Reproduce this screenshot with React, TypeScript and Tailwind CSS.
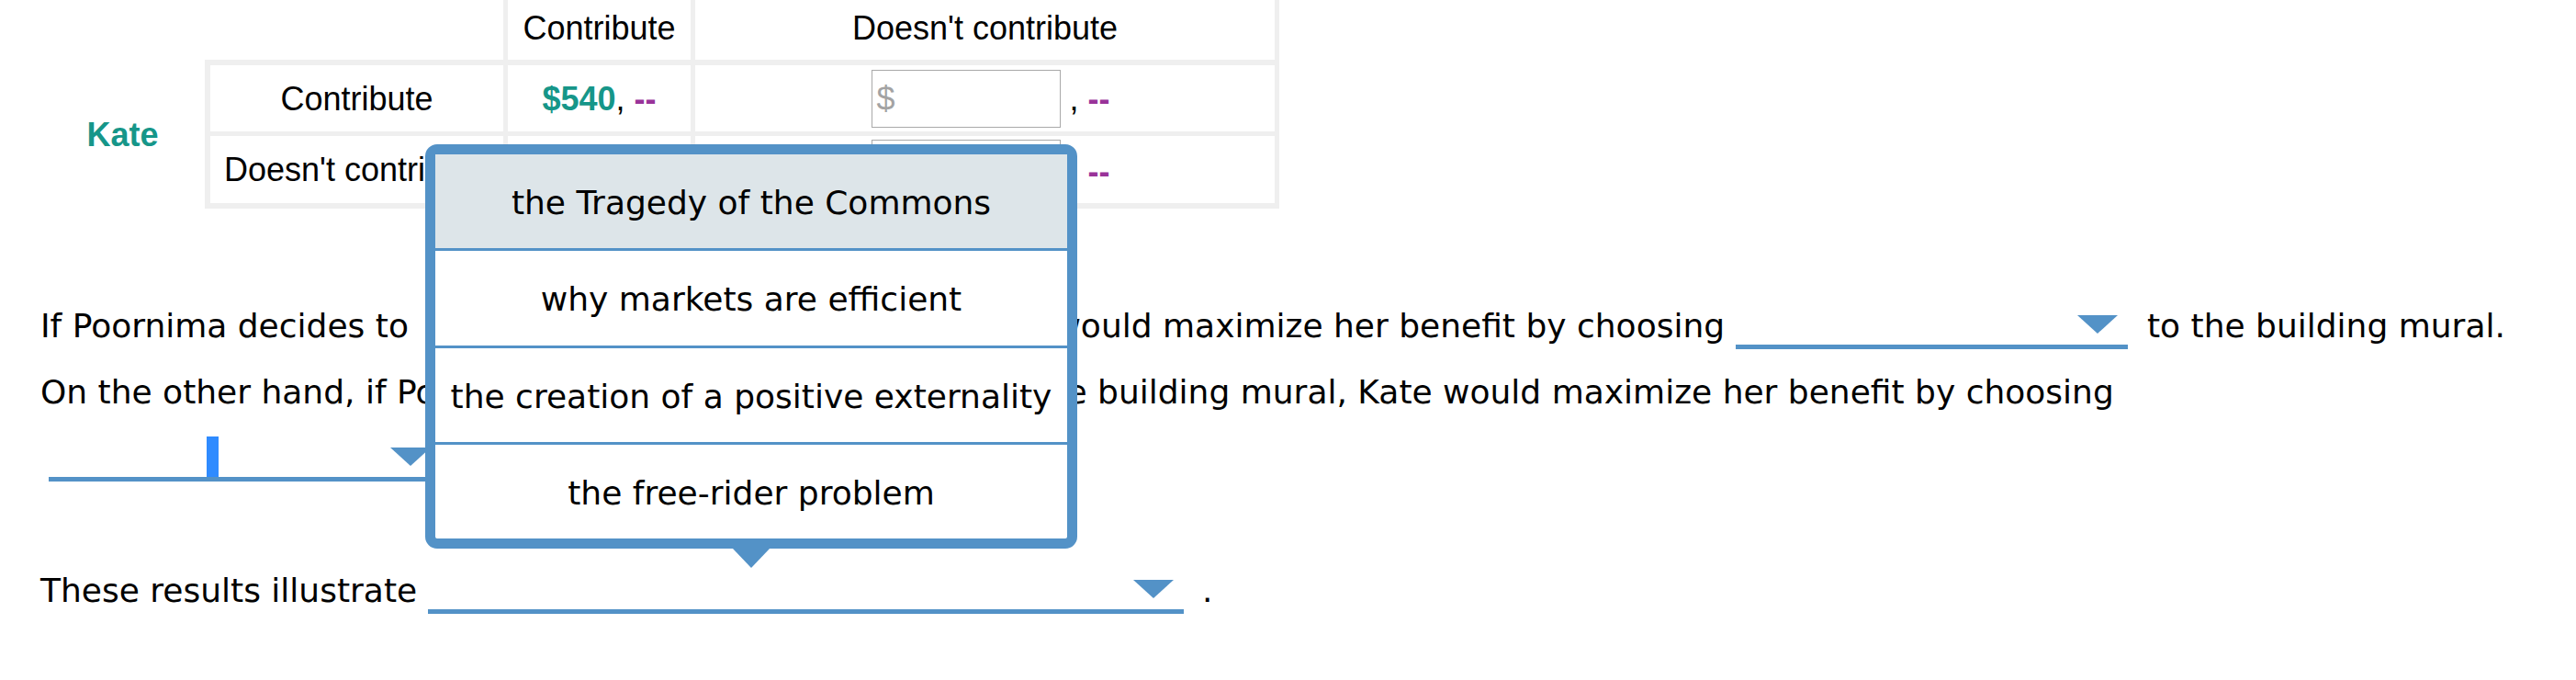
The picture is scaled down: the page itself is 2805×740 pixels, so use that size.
import React from "react";

// game-table + fill-in sentences, dropdown menu opened over them

function Dropdown({ className = "", children }: { className?: string; children?: React.ReactNode }) {
  return (
    <span
      className={`relative inline-block h-[50px] border-b-[5px] border-[#5392c7] align-[-13px] ${className}`}
    >
      {children}
      <span className="absolute right-[11px] bottom-[12px] h-0 w-0 border-x-[22px] border-t-[20px] border-x-transparent border-t-[#5392c7]" />
    </span>
  );
}

function DollarBox() {
  return (
    <span className="inline-flex h-[63px] w-[206px] items-center border border-[#a9a9a9] bg-white pl-[5px] text-[#a3a3a3]">
      $
    </span>
  );
}

const options = [
  "the Tragedy of the Commons",
  "why markets are efficient",
  "the creation of a positive externality",
  "the free-rider problem",
];

export default function App() {
  return (
    <div className="relative h-[740px] w-[2805px] overflow-hidden bg-white pl-[44px] text-black">
      {/* payoff table */}
      <div className="font-['Liberation_Sans',Arial,sans-serif] text-[36px] leading-[41px]">
        <div className="ml-[504px] flex w-fit gap-[5px] bg-[#efefef] px-[5px]">
          <div className="flex h-[65px] w-[199px] items-end justify-center bg-white pb-[14px]">Contribute</div>
          <div className="flex h-[65px] w-[631px] items-end justify-center bg-white pb-[14px]">Doesn't contribute</div>
        </div>
        <div className="flex">
          <div className="flex w-[179px] items-center justify-center font-bold text-[#169689]">Kate</div>
          <div className="grid grid-cols-[319px_199px_631px] grid-rows-[72px_73px] gap-[5px] bg-[#efefef] pt-[6px] pr-[5px] pb-[6px] pl-[6px]">
            <div className="flex items-center justify-center bg-white">Contribute</div>
            <div className="flex items-center justify-center bg-white">
              <span className="font-bold text-[#169689]">$540</span>
              <span>,&nbsp;</span>
              <span className="font-bold text-[#993399]">--</span>
            </div>
            <div className="flex items-center justify-center bg-white pl-[12px]">
              <DollarBox />
              <span className="ml-[10px]">,&nbsp;</span>
              <span className="font-bold text-[#993399]">--</span>
            </div>
            <div className="flex items-center justify-center whitespace-nowrap bg-white">Doesn't contribute</div>
            <div className="flex items-center justify-center bg-white">
              <span className="font-bold text-[#993399]">--</span>
              <span>,&nbsp;</span>
              <span className="font-bold text-[#993399]">--</span>
            </div>
            <div className="flex items-start justify-center bg-white pt-[4px] pl-[12px]">
              <DollarBox />
              <span className="ml-[10px] self-center">,&nbsp;</span>
              <span className="self-center font-bold text-[#993399]">--</span>
            </div>
          </div>
        </div>
      </div>

      {/* sentences */}
      <div className="mt-[92px] font-['DejaVu_Sans',Verdana,sans-serif] text-[36px]">
        <div className="h-[72px] whitespace-nowrap leading-[72px]">
          If Poornima decides to <span className="ml-[10px]">contribute to the building mural,</span>
          <span className="-ml-[10px]"> Kate would maximize her benefit by choosing</span>{" "}
          <Dropdown className="mr-[10px] w-[427px]" /> to the building mural.
        </div>
        <div className="h-[72px] whitespace-nowrap leading-[72px]">
          On the other hand, if Poornima decides not to contribute to the building mural, Kate would maximize her
          benefit by choosing
        </div>
        <div className="h-[72px] whitespace-nowrap leading-[72px]">
          <Dropdown className="mr-[10px] ml-[9px] w-[427px]">
            <span className="absolute bottom-0 left-[172px] h-[44px] w-[13px] bg-[#2f8bff]" />
          </Dropdown>{" "}
          to the building mural.
        </div>
        <div className="mt-[72px] h-[72px] whitespace-nowrap leading-[72px]">
          These results illustrate <Dropdown className="mr-[9px] w-[823px]" /> .
        </div>
      </div>

      {/* open menu */}
      <div className="absolute top-[157px] left-[463px] z-10 flex h-[440px] w-[710px] flex-col rounded-[13px] border-[11px] border-[#5392c7] bg-white font-['DejaVu_Sans',Verdana,sans-serif] text-[36px]">
        {options.map((o, i) => (
          <div
            key={o}
            className={`flex flex-1 items-center justify-center whitespace-nowrap pt-[4px] ${
              i === 0 ? "bg-[#dde5e9]" : "border-t-[3px] border-[#5392c7]"
            }`}
          >
            {o}
          </div>
        ))}
        <span className="absolute top-[calc(100%+10px)] left-1/2 h-0 w-0 -translate-x-1/2 border-x-[21px] border-t-[22px] border-x-transparent border-t-[#5392c7]" />
      </div>
    </div>
  );
}
